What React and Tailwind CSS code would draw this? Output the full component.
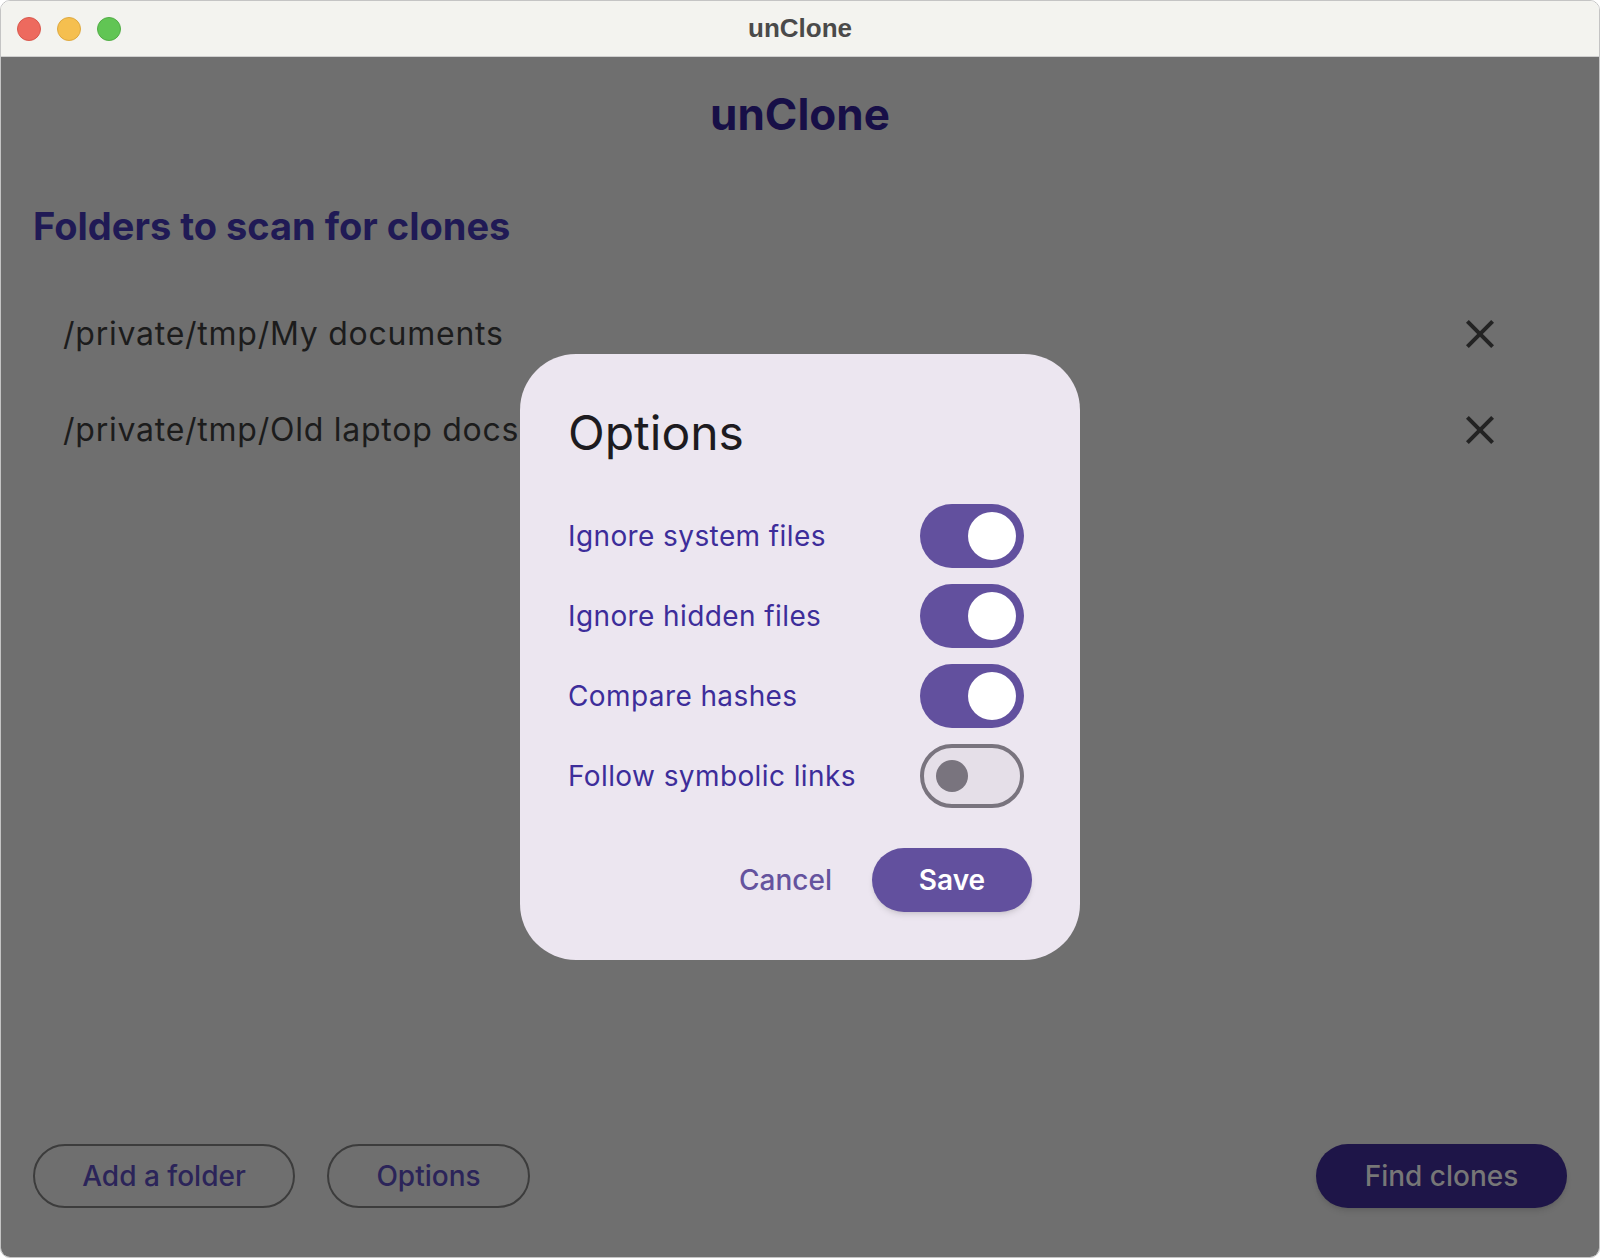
import { useState } from "react";

const folders = ["/private/tmp/My documents", "/private/tmp/Old laptop docs"];

const initialOptions = [
  { key: "system", label: "Ignore system files", on: true },
  { key: "hidden", label: "Ignore hidden files", on: true },
  { key: "hashes", label: "Compare hashes", on: true },
  { key: "links", label: "Follow symbolic links", on: false },
];

function CloseIcon() {
  return (
    <svg width="48" height="48" viewBox="0 0 24 24" fill="#232323">
      <path d="M19 6.41L17.59 5 12 10.59 6.41 5 5 6.41 10.59 12 5 17.59 6.41 19 12 13.41 17.59 19 19 17.59 13.41 12z" />
    </svg>
  );
}

function Toggle({ on, onClick }) {
  return (
    <button
      onClick={onClick}
      className={`flex items-center w-[104px] h-[64px] rounded-full shrink-0 ${
        on ? "bg-[#62509e] justify-end pr-2" : "bg-[#e5dfe8] border-4 border-[#79747e] justify-start pl-3"
      }`}
    >
      {on ? (
        <span className="block w-12 h-12 rounded-full bg-white" />
      ) : (
        <span className="block w-8 h-8 rounded-full bg-[#79747e]" />
      )}
    </button>
  );
}

export default function App() {
  const [options, setOptions] = useState(initialOptions);

  const toggle = (key) => {
    setOptions((prev) => prev.map((o) => (o.key === key ? { ...o, on: !o.on } : o)));
  };

  return (
    <div className="w-[1600px] h-[1258px] bg-white font-['Inter','Noto_Sans',sans-serif]">
      <div className="w-full h-full flex flex-col rounded-[10px] overflow-hidden border border-[#c4c4c4]">
        {/* Title bar */}
        <div className="relative h-14 shrink-0 bg-[#f3f3ef] border-b border-[#cfcfcf] flex items-center justify-center">
          <div className="absolute left-4 top-4 flex gap-4">
            <span className="block w-6 h-6 rounded-full bg-[#ed6a5e] border border-[#d9584d]" />
            <span className="block w-6 h-6 rounded-full bg-[#f5bf4f] border border-[#dea940]" />
            <span className="block w-6 h-6 rounded-full bg-[#61c554] border border-[#52ad46]" />
          </div>
          <span className="text-[26px] font-bold text-[#4a4a4a] font-['Liberation_Sans',sans-serif]">unClone</span>
        </div>

        {/* Content (dimmed by dialog scrim) */}
        <div className="relative flex-1 flex flex-col bg-[#6f6f6f] px-8 pb-[49px]">
          <h1 className="mt-[30px] text-center text-[44px] leading-[54px] font-bold text-[#170f47]">unClone</h1>

          <h2 className="mt-[62px] text-[38px] leading-[46px] font-bold text-[#201a55]">Folders to scan for clones</h2>

          <div className="mt-[37px] flex flex-col">
            {folders.map((f) => (
              <div key={f} className="flex items-center justify-between h-[96px] pl-[30px] pr-[63px]">
                <span className="text-[32px] text-[#1c1c1c] tracking-[0.75px]">{f}</span>
                <CloseIcon />
              </div>
            ))}
          </div>

          <div className="mt-auto flex items-center justify-between">
            <div className="flex gap-8">
              <button className="h-16 w-[262px] rounded-full border-2 border-[#3c3c3c] text-[28px] font-medium text-[#2b2459]">
                Add a folder
              </button>
              <button className="h-16 w-[203px] rounded-full border-2 border-[#3c3c3c] text-[28px] font-medium text-[#2b2459]">
                Options
              </button>
            </div>
            <button className="h-16 w-[251px] rounded-full bg-[#1e1548] text-[28px] font-medium text-[#777777] shadow-md">
              Find clones
            </button>
          </div>

          {/* Options dialog */}
          <div className="absolute inset-0 flex items-center justify-center">
            <div className="w-[560px] rounded-[56px] bg-[#ece6f0] pt-12 pb-12 pl-12 pr-12">
              <h3 className="text-[48px] leading-[62px] text-[#1d1b20]">Options</h3>
              <div className="mt-10 flex flex-col gap-4 pr-2">
                {options.map((o) => (
                  <div key={o.key} className="flex items-center justify-between">
                    <span className="text-[28px] text-[#3d2d9a] tracking-[0.4px]">{o.label}</span>
                    <Toggle on={o.on} onClick={() => toggle(o.key)} />
                  </div>
                ))}
              </div>
              <div className="mt-10 flex items-center justify-end gap-4">
                <button className="h-16 px-6 text-[28px] font-medium text-[#65539e]">Cancel</button>
                <button className="h-16 w-40 rounded-full bg-[#62509e] text-[28px] font-semibold text-white shadow-md">
                  Save
                </button>
              </div>
            </div>
          </div>
        </div>
      </div>
    </div>
  );
}
